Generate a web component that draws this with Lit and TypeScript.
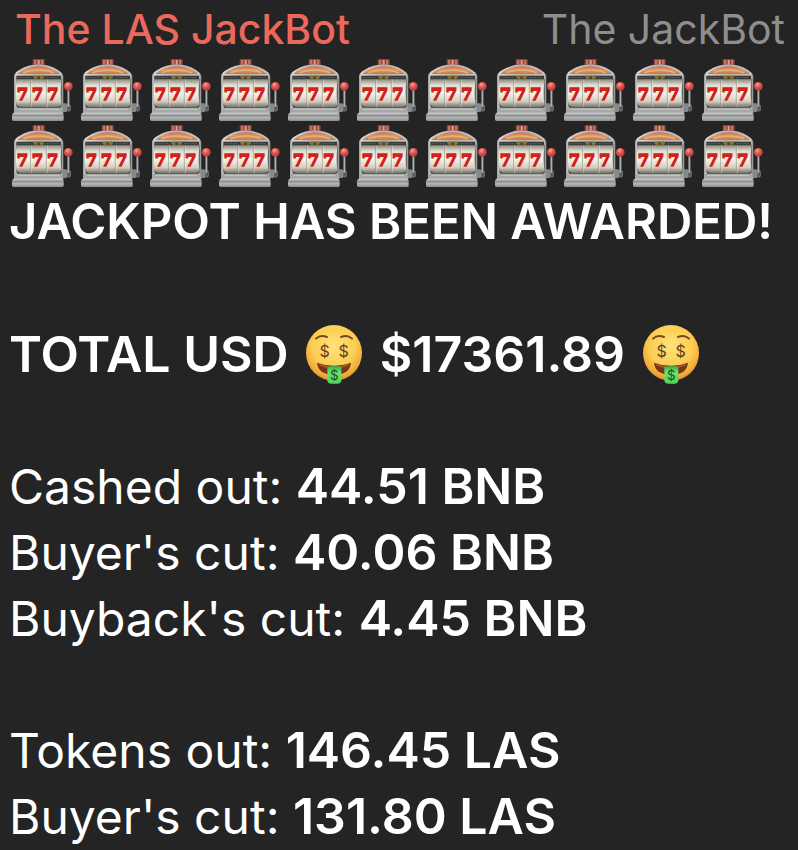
import { LitElement, html, css, svg } from "lit";
import { customElement, property } from "lit/decorators.js";

@customElement("slot-machine")
class SlotMachine extends LitElement {
  static styles = css`
    :host { display: block; width: 69px; height: 66px; }
    svg { display: block; width: 100%; height: 100%; }
    .seven { font: bold 49px "DejaVu Serif", serif; fill: #dc231e; stroke: #d0201b; stroke-width: 4; }
  `;
  render() {
    return html`<svg viewBox="30 21 207 198" role="img" aria-label="Slot machine">
      <defs>
        <linearGradient id="reel" x1="0" y1="0" x2="0" y2="1">
          <stop offset="0" stop-color="#8d8b7e" /><stop offset=".2" stop-color="#dfddd0" />
          <stop offset=".5" stop-color="#f4f2e8" /><stop offset=".8" stop-color="#d2cfc0" />
          <stop offset="1" stop-color="#77746a" />
        </linearGradient>
        <linearGradient id="base" x1="0" y1="0" x2="0" y2="1">
          <stop offset="0" stop-color="#c2c4c5" /><stop offset=".35" stop-color="#8f9292" />
          <stop offset=".6" stop-color="#b4b6b6" /><stop offset="1" stop-color="#8b8d8d" />
        </linearGradient>
        <linearGradient id="side" x1="0" y1="0" x2="1" y2="0">
          <stop offset="0" stop-color="#999b9b" /><stop offset=".05" stop-color="#d6d7d7" />
          <stop offset=".5" stop-color="#b0b2b2" /><stop offset=".95" stop-color="#c4c6c6" />
          <stop offset="1" stop-color="#858787" />
        </linearGradient>
        <linearGradient id="dome" x1="0" y1="0" x2="0" y2="1">
          <stop offset="0" stop-color="#c57456" /><stop offset=".5" stop-color="#e49468" />
          <stop offset="1" stop-color="#c07a4c" />
        </linearGradient>
        <radialGradient id="knob" cx=".4" cy=".3" r=".7">
          <stop offset="0" stop-color="#ffa39b" /><stop offset=".4" stop-color="#e65b57" />
          <stop offset="1" stop-color="#b03838" />
        </radialGradient>
      </defs>
      <rect x="98" y="27" width="36" height="19" rx="4" fill="#8f4037" />
      <path d="M102 30h7v12h-7zM123 30h7v12h-7z" fill="#c8705f" />
      <path d="M113 30h6v12h-6z" fill="#e2a08c" />
      <path d="M42 77Q44 68 58 60Q84 44 116 43Q148 44 174 60Q187 68 190 77V186H42z" fill="url(#side)" />
      <path d="M52 72Q78 49 116 49Q154 49 180 72z" fill="url(#dome)" />
      <path d="M70 68Q90 60 116 60Q142 60 162 68" fill="none" stroke="#e9b26a" stroke-width="5" />
      <rect x="49" y="77" width="134" height="12" fill="#3b3a39" />
      <path d="M54 82H94M138 82H178" stroke="#77766f" stroke-width="2" stroke-dasharray="5 3" />
      <path d="M98 79H134L126 89H106z" fill="#8f7a38" />
      <path d="M112 80h8v8h-8z" fill="#544315" />
      <path d="M49 86H185V169Q182 177 174 177H58Q49 176 49 165z" fill="#464540" />
      <path d="M49 88H185Q179 130 185 165Q180 171 172 171H60Q52 170 49 162Q46 130 49 88z" fill="url(#reel)" />
      <path d="M92 89V171M139 89V171" stroke="#8f8d82" stroke-width="2" />
      <path d="M95 89V171M142 89V171" stroke="#fff" stroke-width="1" />
      ${[67, 112, 158].map((x) => svg`<text class="seven" x=${x} y="149" text-anchor="middle">7</text>`)}
      <path d="M42 173H190V190H42z" fill="#a6a8a8" />
      <path d="M53 178H178" stroke="#c6c8c8" stroke-width="3" />
      <path d="M42 188H186Q191 189 191 195V209Q191 213 186 213H41Q36 213 36 208V196Q37 189 42 188z" fill="url(#base)" />
      <path d="M40 190H187" stroke="#d2d3d3" stroke-width="2" />
      <rect x="188" y="160" width="13" height="26" rx="3" fill="#858989" />
      <rect x="201" y="164" width="10" height="19" rx="3" fill="#55595a" stroke="#8f9393" stroke-width="2" />
      <path d="M205 117V170" stroke="#b6baba" stroke-width="5" />
      <path d="M208 120V166" stroke="#6c7171" stroke-width="2" />
      <circle cx="205" cy="109" r="13" fill="url(#knob)" />
    </svg>`;
  }
}

@customElement("money-face")
class MoneyFace extends LitElement {
  static styles = css`
    :host { display: inline-block; width: 62px; height: 60px; margin: 0 2px; vertical-align: -12px; }
    svg { display: block; width: 100%; height: 100%; }
    .eye { font: 48px "Inter", sans-serif; fill: #65401b; }
    .bill { font: 40px "Inter", sans-serif; fill: #174f1b; }
  `;
  render() {
    return html`<svg viewBox="17 26 186 180" role="img" aria-label="Money-mouth face">
      <defs>
        <radialGradient id="skin" cx=".5" cy=".38" r=".64">
          <stop offset="0" stop-color="#ffe27a" /><stop offset=".6" stop-color="#fccd52" />
          <stop offset=".85" stop-color="#f1aa38" /><stop offset="1" stop-color="#d98425" />
        </radialGradient>
        <linearGradient id="note" x1="0" y1="0" x2="0" y2="1">
          <stop offset="0" stop-color="#35a947" /><stop offset=".35" stop-color="#6ce36c" />
          <stop offset="1" stop-color="#4fd35b" />
        </linearGradient>
      </defs>
      <circle cx="110" cy="113" r="84" fill="url(#skin)" />
      <path d="M56 70Q69 57 89 65M131 65Q151 57 164 70" fill="none" stroke="#74491d" stroke-width="6" stroke-linecap="round" />
      <text class="eye" x="82" y="126" text-anchor="middle">$</text>
      <text class="eye" x="139" y="126" text-anchor="middle">$</text>
      <path d="M59 142Q110 161 161 142Q158 177 110 179Q62 177 59 142z" fill="#753516" />
      <path d="M64 145Q110 163 156 145L153 151Q110 168 67 151z" fill="#a65b28" />
      <path d="M90 155Q111 149 132 155V194Q132 204 122 205H100Q90 204 90 194z" fill="url(#note)" />
      <text class="bill" x="111" y="193" text-anchor="middle">$</text>
    </svg>`;
  }
}

@customElement("app-root")
class AppRoot extends LitElement {
  @property({ type: Number }) machines = 22;

  static styles = css`
    :host {
      display: block; box-sizing: border-box; min-height: 100vh; background: #242424; color: #fff;
      font: 400 48px/66px "Inter", sans-serif; overflow-x: hidden;
    }
    header {
      display: flex; justify-content: space-between; padding: 2px 13px 0 15px;
      font-size: 41px; line-height: 55px;
    }
    .name { color: #ea695c; font-weight: 500; }
    .rank { color: #8e8e8e; }
    .reels { display: grid; grid-template-columns: repeat(11, 69px); padding-left: 10px; }
    .message { padding-left: 9px; white-space: nowrap; }
    p { margin: 0 0 66px; }
    p:last-child { margin-bottom: 0; }
    .line { display: block; height: 66px; }
    strong { font-size: 50px; font-weight: 600; }
    .headline { font-size: 49px; }
  `;

  private row(label: string, value: string) {
    return html`<span class="line">${label}: <strong>${value}</strong></span>`;
  }

  render() {
    return html`
      <header><span class="name">The LAS JackBot</span><span class="rank">The JackBot</span></header>
      <main>
        <div class="reels">${Array.from({ length: this.machines }, () => html`<slot-machine></slot-machine>`)}</div>
        <div class="message">
          <p><strong class="line headline">JACKPOT HAS BEEN AWARDED!</strong></p>
          <p><strong class="line">TOTAL USD <money-face></money-face> $17361.89 <money-face></money-face></strong></p>
          <p>
            ${this.row("Cashed out", "44.51 BNB")}
            ${this.row("Buyer's cut", "40.06 BNB")}
            ${this.row("Buyback's cut", "4.45 BNB")}
          </p>
          <p>
            ${this.row("Tokens out", "146.45 LAS")}
            ${this.row("Buyer's cut", "131.80 LAS")}
          </p>
        </div>
      </main>
    `;
  }
}
